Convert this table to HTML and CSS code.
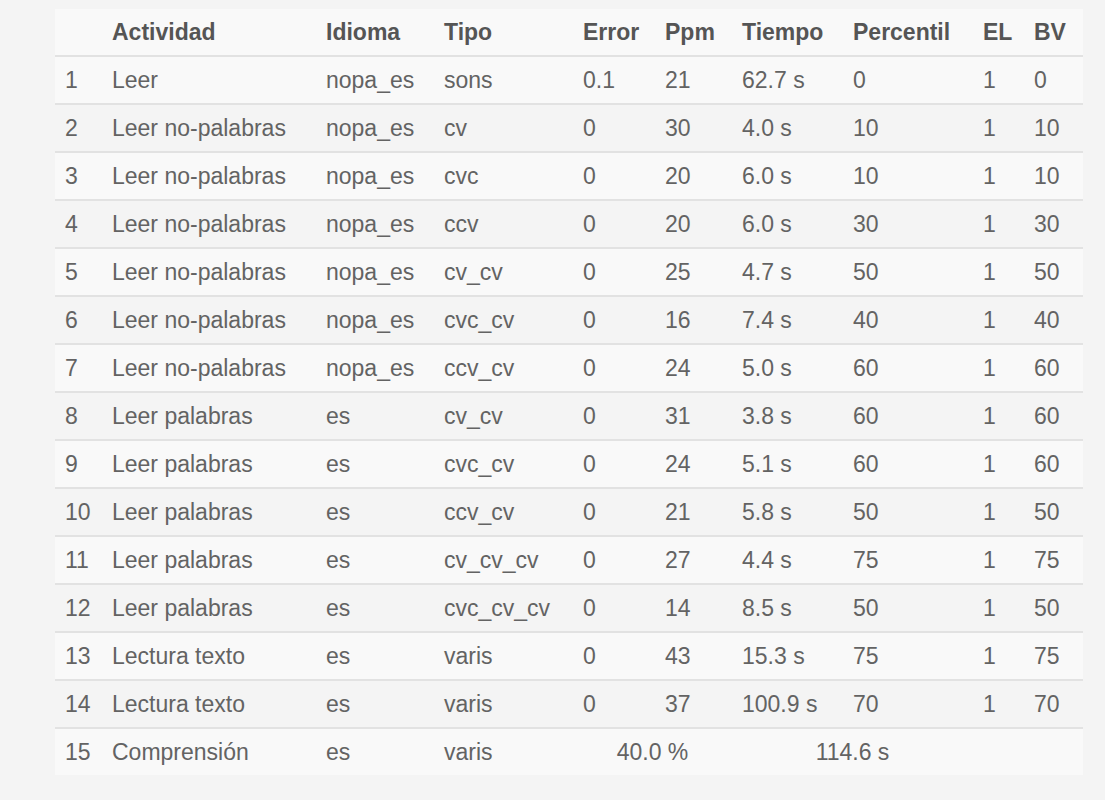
FILE: index.html
```html
<!DOCTYPE html>
<html lang="es">
<head>
<meta charset="utf-8">
<title>Resultados</title>
<link rel="stylesheet" href="styles.css">
</head>
<body>
<div class="wrap">
<table class="results">
  <colgroup>
    <col class="c-num"><col class="c-act"><col class="c-idi"><col class="c-tipo"><col class="c-err"><col class="c-ppm"><col class="c-tie"><col class="c-per"><col class="c-el"><col class="c-bv">
  </colgroup>
  <thead>
    <tr><th></th><th>Actividad</th><th>Idioma</th><th>Tipo</th><th>Error</th><th>Ppm</th><th>Tiempo</th><th>Percentil</th><th>EL</th><th>BV</th></tr>
  </thead>
  <tbody>
    <tr><td>1</td><td>Leer</td><td>nopa_es</td><td>sons</td><td>0.1</td><td>21</td><td>62.7 s</td><td>0</td><td>1</td><td>0</td></tr>
    <tr><td>2</td><td>Leer no-palabras</td><td>nopa_es</td><td>cv</td><td>0</td><td>30</td><td>4.0 s</td><td>10</td><td>1</td><td>10</td></tr>
    <tr><td>3</td><td>Leer no-palabras</td><td>nopa_es</td><td>cvc</td><td>0</td><td>20</td><td>6.0 s</td><td>10</td><td>1</td><td>10</td></tr>
    <tr><td>4</td><td>Leer no-palabras</td><td>nopa_es</td><td>ccv</td><td>0</td><td>20</td><td>6.0 s</td><td>30</td><td>1</td><td>30</td></tr>
    <tr><td>5</td><td>Leer no-palabras</td><td>nopa_es</td><td>cv_cv</td><td>0</td><td>25</td><td>4.7 s</td><td>50</td><td>1</td><td>50</td></tr>
    <tr><td>6</td><td>Leer no-palabras</td><td>nopa_es</td><td>cvc_cv</td><td>0</td><td>16</td><td>7.4 s</td><td>40</td><td>1</td><td>40</td></tr>
    <tr><td>7</td><td>Leer no-palabras</td><td>nopa_es</td><td>ccv_cv</td><td>0</td><td>24</td><td>5.0 s</td><td>60</td><td>1</td><td>60</td></tr>
    <tr><td>8</td><td>Leer palabras</td><td>es</td><td>cv_cv</td><td>0</td><td>31</td><td>3.8 s</td><td>60</td><td>1</td><td>60</td></tr>
    <tr><td>9</td><td>Leer palabras</td><td>es</td><td>cvc_cv</td><td>0</td><td>24</td><td>5.1 s</td><td>60</td><td>1</td><td>60</td></tr>
    <tr><td>10</td><td>Leer palabras</td><td>es</td><td>ccv_cv</td><td>0</td><td>21</td><td>5.8 s</td><td>50</td><td>1</td><td>50</td></tr>
    <tr><td>11</td><td>Leer palabras</td><td>es</td><td>cv_cv_cv</td><td>0</td><td>27</td><td>4.4 s</td><td>75</td><td>1</td><td>75</td></tr>
    <tr><td>12</td><td>Leer palabras</td><td>es</td><td>cvc_cv_cv</td><td>0</td><td>14</td><td>8.5 s</td><td>50</td><td>1</td><td>50</td></tr>
    <tr><td>13</td><td>Lectura texto</td><td>es</td><td>varis</td><td>0</td><td>43</td><td>15.3 s</td><td>75</td><td>1</td><td>75</td></tr>
    <tr><td>14</td><td>Lectura texto</td><td>es</td><td>varis</td><td>0</td><td>37</td><td>100.9 s</td><td>70</td><td>1</td><td>70</td></tr>
    <tr><td>15</td><td>Comprensión</td><td>es</td><td>varis</td><td colspan="2" class="center">40.0 %</td><td colspan="2" class="center">114.6 s</td><td></td><td></td></tr>
  </tbody>
</table>
</div>
</body>
</html>
```

FILE: styles.css
```css
html, body {
  margin: 0;
  padding: 0;
  background: #f4f4f4;
}

.wrap {
  padding: 9px 22px 0 55px;
}

.results {
  width: 1028px;
  border-collapse: collapse;
  table-layout: fixed;
  font-family: "Liberation Sans", Arial, Helvetica, sans-serif;
  font-size: 23px;
  color: #636363;
}

.c-num { width: 47px; }
.c-act { width: 214px; }
.c-idi { width: 118px; }
.c-tipo { width: 139px; }
.c-err { width: 82px; }
.c-ppm { width: 77px; }
.c-tie { width: 111px; }
.c-per { width: 130px; }
.c-el { width: 51px; }
.c-bv { width: 59px; }

.results th,
.results td {
  padding: 0 10px;
  line-height: 30px;
  text-align: left;
  vertical-align: middle;
  white-space: nowrap;
}

.results th {
  height: 46px;
  font-weight: bold;
  color: #555;
  border-bottom: 2px solid #e2e2e2;
}

.results td {
  height: 46px;
}

.results thead tr {
  background: #f9f9f9;
}

.results tbody tr {
  border-top: 2px solid #e2e2e2;
}

.results tbody tr:first-child {
  border-top: none;
}

.results tbody tr:nth-child(odd) {
  background: #f9f9f9;
}

.results td.center {
  text-align: center;
}
```
